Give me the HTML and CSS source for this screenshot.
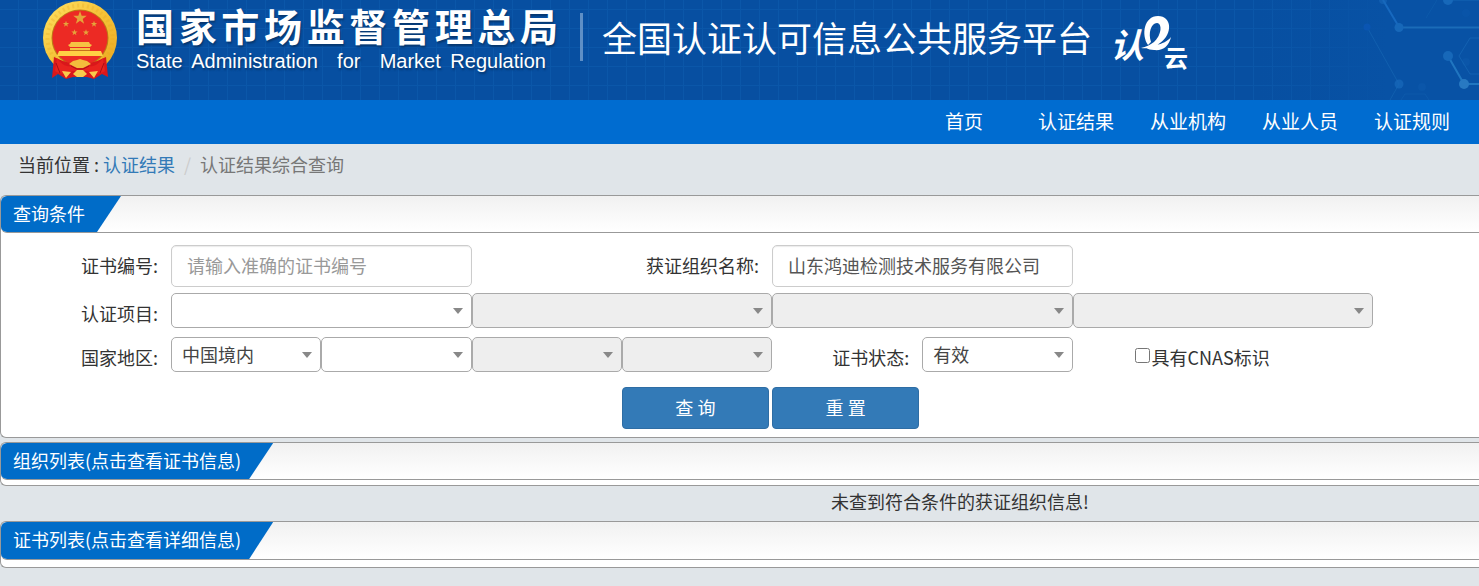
FILE: index.html
```html
<!DOCTYPE html>
<html lang="zh-CN">
<head>
<meta charset="utf-8">
<meta name="viewport" content="width=device-width, initial-scale=1">
<title>认证结果综合查询</title>
<link rel="stylesheet" href="styles.css">
</head>
<body>
<header class="banner">
  <svg class="banner-net" width="200" height="100" viewBox="0 0 200 100" aria-hidden="true">
    <g fill="none" stroke="#2b86cc">
      <path d="M104 0 120 27" stroke="#1769bf" stroke-width="2"/>
      <path d="M120 27.500H200" stroke-width="2" opacity=".5"/>
      <path d="M88 27 120 84 111 100" opacity=".25"/>
      <path d="M169 56 185 84H200" stroke-width="2" opacity=".7"/>
      <path d="M169 0H200" opacity=".4"/>
      <path d="M200 38H191L180 56 191 74H200" opacity=".3"/>
      <path d="M122 100 126 94H146L150 100M147 18 158 0" opacity=".15"/>
    </g>
    <g fill="#1768b9">
      <circle cx="120" cy="27.500" r="4.500"/><circle cx="120" cy="84" r="4.500" opacity=".75"/>
      <circle cx="169" cy="56" r="5"/><circle cx="185" cy="84" r="5" fill="#2879c2"/>
      <circle cx="169" cy="0" r="5"/><circle cx="104" cy="0" r="4" opacity=".6"/>
      <circle cx="88" cy="27" r="3.500" fill="#0a55b2"/><circle cx="143" cy="87" r="4" opacity=".2"/>
      <circle cx="187" cy="13" r="4" opacity=".15"/><circle cx="187" cy="62" r="4" opacity=".2"/>
    </g>
  </svg>
  <svg class="emblem" width="76" height="80" viewBox="0 0 76 80" role="img" aria-label="国徽">
    <defs>
      <linearGradient id="gold" x1="0" y1="0" x2="1" y2="1"><stop offset="0" stop-color="#ffe263"/><stop offset=".5" stop-color="#f5c237"/><stop offset="1" stop-color="#eaa51e"/></linearGradient>
      <path id="star" d="M0-7 1.700-2.200H6.700L2.700.9 4.100 5.700 0 2.800-4.100 5.700-2.700.9-6.700-2.200H-1.700Z"/>
    </defs>
    <circle cx="38" cy="38" r="37" fill="url(#gold)"/>
    <circle cx="38" cy="38" r="32.500" fill="none" stroke="#e3a522" stroke-width="4" stroke-dasharray="2 3" opacity=".3"/>
    <circle cx="38" cy="38" r="28.500" fill="#bd7c16"/>
    <circle cx="38" cy="38" r="27.500" fill="#ec2a24"/>
    <g fill="#e5a43a">
      <use href="#star" transform="translate(38 18)"/>
      <use href="#star" transform="translate(24 24) scale(.47)"/>
      <use href="#star" transform="translate(52 24) scale(.47)"/>
      <use href="#star" transform="translate(32.500 32.500) scale(.47)"/>
      <use href="#star" transform="translate(44 32.500) scale(.47)"/>
    </g>
    <path d="M29 42H47L48 44 50 45 48 47H28L26 45 28 44ZM28 48H48V51H28Z" fill="#f6c343"/>
    <path d="M17 51H59L61 56H15Z" fill="#ffd044"/>
    <path d="M28 50.500H48" stroke="#c8701c"/>
    <path d="M12 57 21 61 38 66 55 61 64 57 66 77 60 74 52 79 45 77H31L24 79 16 74 10 78Z" fill="#d9171b"/>
    <path d="M15 58C20 66 27 68 33 65L38 63 43 65C49 68 56 66 61 58L63 71C57 75 51 74 45 71H31C25 74 19 75 13 71Z" fill="#e8231f"/>
    <path d="M31 66 27 64 31 61 35 60 38 59 41 60 45 61 49 64 45 66 41 68H35Z" fill="#f3bd3c"/>
    <path d="M20 71 29 72 24 78ZM56 71 47 72 52 78ZM31 74 35 70H41L45 74 41 77H35Z" fill="#f8cb4c"/>
    <path d="M29 66 35 69H41L47 66M14 63 18 73M62 63 58 73" fill="none" stroke="#a80f15"/>
  </svg>
  <div class="agency">
    <p class="agency-cn">国家市场监督管理总局</p>
    <p class="agency-en" lang="en">State Administration &nbsp;for &nbsp;Market Regulation</p>
  </div>
  <h1 class="platform">全国认证认可信息公共服务平台</h1>
  <svg class="cloud-logo" width="90" height="76" viewBox="0 0 90 76" role="img" aria-label="认e云">
    <text class="logo-ren" x="-1" y="45">认</text>
    <path d="M37 32C30 22 33 3 47 3C61 3 62 21 49 30C44 34 37 36 30 35C35 34 39 32 43 29C50 23 52 11 46 10C40 10 37 20 40 29ZM45 32C51 31 57 28 60 24C58 33 52 38 43 37C40 37 37 36 35 35Z" fill="#fff"/>
    <text class="logo-yun" x="53" y="54">云</text>
  </svg>
</header>

<nav class="main-nav" aria-label="主导航">
  <a href="#home">首页</a>
  <a href="#results">认证结果</a>
  <a href="#agencies">从业机构</a>
  <a href="#people">从业人员</a>
  <a href="#rules">认证规则</a>
</nav>

<div class="breadcrumb">
  <span>当前位置 :</span>
  <a href="#results">认证结果</a>
  <span class="slash">/</span>
  <span class="here">认证结果综合查询</span>
</div>

<main>
  <section class="panel">
    <div class="panel-head"><h2 class="tab">查询条件</h2></div>
    <form class="query">
      <div class="row row-text">
        <label for="cert-no">证书编号:</label>
        <input class="field wide" id="cert-no" type="text" placeholder="请输入准确的证书编号">
        <label class="wide" for="org">获证组织名称:</label>
        <input class="field wide" id="org" type="text" value="山东鸿迪检测技术服务有限公司">
      </div>
      <div class="row row-project">
        <label for="project">认证项目:</label>
        <select class="pick wide" id="project"><option></option></select>
        <select class="pick wide" aria-label="认证项目二级" disabled><option></option></select>
        <select class="pick wide" aria-label="认证项目三级" disabled><option></option></select>
        <select class="pick wide" aria-label="认证项目四级" disabled><option></option></select>
      </div>
      <div class="row row-region">
        <label for="region">国家地区:</label>
        <select class="pick" id="region"><option>中国境内</option></select>
        <select class="pick" aria-label="省"><option></option></select>
        <select class="pick" aria-label="市" disabled><option></option></select>
        <select class="pick" aria-label="区县" disabled><option></option></select>
        <label for="status">证书状态:</label>
        <select class="pick" id="status"><option>有效</option></select>
        <div class="check wide"><input id="cnas" type="checkbox"><label for="cnas">具有CNAS标识</label></div>
      </div>
      <div class="row row-buttons">
        <button class="btn first" type="submit">查 询</button>
        <button class="btn" type="reset">重 置</button>
      </div>
    </form>
  </section>

  <section class="panel orgs">
    <div class="panel-head"><h2 class="tab">组织列表(点击查看证书信息)</h2></div>
  </section>
  <p class="empty">未查到符合条件的获证组织信息!</p>

  <section class="panel certs">
    <div class="panel-head"><h2 class="tab">证书列表(点击查看详细信息)</h2></div>
  </section>
</main>
</body>
</html>
```

FILE: styles.css
```css
* { box-sizing: border-box; }

body {
  margin: 0;
  background: #e0e5e9;
  color: #333;
  font: 18px/24px "Noto Sans CJK SC", sans-serif;
  overflow-x: hidden;
}

h1, h2, p { margin: 0; font-weight: 400; }
a { text-decoration: none; }
input, select, button { font: inherit; margin: 0; min-width: 0; }

.banner {
  position: relative;
  display: flex;
  align-items: flex-start;
  height: 100px;
  padding-left: 42px;
  color: #fff;
  background:
    linear-gradient(90deg, transparent 85%, #0852a5 94%),
    repeating-linear-gradient(90deg, transparent 0 18px, #0b57a9 18px 19px),
    repeating-linear-gradient(180deg, transparent 0 9px, #0b57a9 9px 10px, transparent 10px 19px),
    #074fa1;
}
.banner-net { position: absolute; right: 0; top: 0; }
.emblem { flex: none; }

.agency {
  flex: none;
  width: 422px;
  margin-left: 18px;
  padding-top: 2px;
  text-shadow: 1px 2px 2px #06376f;
}
.agency-cn {
  font-size: 38px;
  line-height: 46px;
  font-weight: 700;
  text-align-last: justify;
}
.agency-en {
  padding-right: 12px;
  font: 20px/26px "Liberation Sans", sans-serif;
  text-align-last: justify;
  white-space: nowrap;
}
.platform {
  flex: none;
  margin: 13px 0 0 22px;
  padding-left: 19px;
  border-left: 3px solid #5e8fc6;
  font-size: 35px;
  line-height: 48px;
}
.cloud-logo { flex: none; margin: 13px 0 0 19px; }
.logo-ren, .logo-yun { fill: #fff; font-weight: 700; }
.logo-ren { font-size: 34px; font-style: italic; }
.logo-yun { font-size: 24px; }

.main-nav {
  display: flex;
  justify-content: flex-end;
  height: 44px;
  padding-right: 11px;
  background: #006cd0;
}
.main-nav a {
  width: 112px;
  color: #fff;
  font-size: 19px;
  line-height: 42px;
  text-align: center;
}

.breadcrumb {
  display: flex;
  height: 51px;
  padding: 8px 18px;
}
.breadcrumb a { margin-left: 4px; color: #337ab7; }
.slash { margin: 0 9px; color: #ccc; }
.here { color: #777; }

.panel {
  background: #fff;
  border: 1px solid #999;
  border-right: 0;
  border-radius: 6px 0 0 6px;
}
.panel-head {
  display: flex;
  height: 37px;
  border-bottom: 1px solid #999;
  border-radius: 6px 0 0 6px;
  background: linear-gradient(#f1f1f1, #fff);
  overflow: hidden;
}
.tab {
  padding: 0 36px 0 12px;
  background: #006cc8;
  clip-path: polygon(0 0, 100% 0, calc(100% - 24px) 100%, 0 100%);
  color: #fff;
  font-size: 18px;
  line-height: 34px;
}
.orgs .tab, .certs .tab { padding-right: 32px; }

.query { padding: 12px 0 8px; }
.row {
  display: grid;
  grid-template-columns: 170px repeat(8, 1fr) 106px;
}
.row > label { padding-right: 13px; text-align: right; }
.wide { grid-column: span 2; }
.row-text { margin-bottom: 6px; }
.row-text > label { line-height: 40px; }
.row-project { margin-bottom: 9px; }
.row-project > label, .row-region > label { line-height: 40px; height: 35px; }
.row-region { margin-bottom: 15px; }

.field {
  height: 42px;
  padding: 0 15px 2px;
  border: 1px solid #ccc;
  border-radius: 5px;
  background: #fff;
  box-shadow: inset 0 1px 1px rgba(0, 0, 0, .08);
  color: #555;
}
.field::placeholder { color: #999; opacity: 1; }

.pick {
  appearance: none;
  height: 35px;
  padding: 0 24px 2px 10px;
  border: 1px solid #aaa;
  border-radius: 5px;
  background: #fff url("data:image/svg+xml,%3Csvg xmlns='http://www.w3.org/2000/svg' width='10' height='6'%3E%3Cpath d='M0 0H10L5 6Z' fill='%23888'/%3E%3C/svg%3E") no-repeat right 8px center;
  color: #444;
}
.pick:disabled { background-color: #eee; opacity: 1; }

.check {
  display: flex;
  align-items: flex-start;
  padding-left: 62px;
  white-space: nowrap;
}
.check input { width: 15px; height: 15px; margin: 11px 2px 0 0; }
.check label { line-height: 40px; height: 35px; }

.btn {
  height: 42px;
  margin-right: 3px;
  border: 1px solid #2e6da4;
  border-radius: 4px;
  background: #337ab7;
  color: #fff;
  line-height: 36px;
  padding: 0 0 3px;
}
.btn.first { grid-column-start: 5; }

.orgs { margin-top: 4px; padding-bottom: 5px; }
.certs { padding-bottom: 7px; }
.certs .panel-head { height: 38px; }
.empty {
  padding: 3px 0 8px 441px;
  text-align: center;
}
```
